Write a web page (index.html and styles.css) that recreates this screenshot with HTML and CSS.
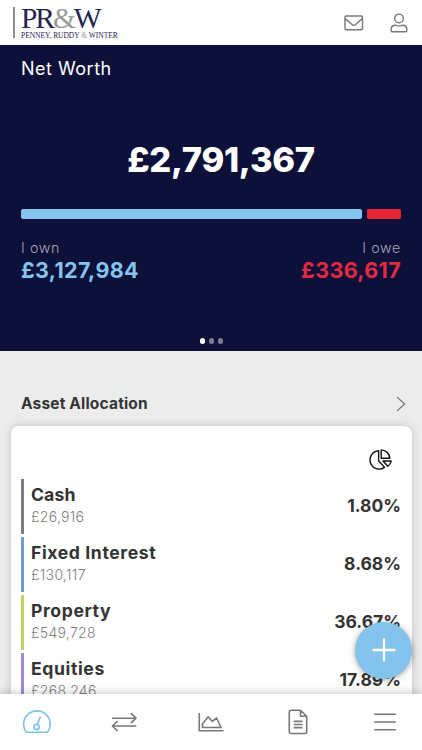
FILE: index.html
```html
<!DOCTYPE html>
<html lang="en">
<head>
<meta charset="utf-8">
<meta name="viewport" content="width=device-width, initial-scale=1">
<title>Net Worth</title>
<link rel="stylesheet" href="styles.css">
</head>
<body>
<div class="app">
  <header class="header">
    <div class="logo">
      <div class="logo-mark">PR<span class="amp">&amp;</span>W</div>
      <div class="logo-name">PENNEY, RUDDY <span class="amp">&amp;</span> WINTER</div>
    </div>
    <div class="header-icons">
      <svg width="20" height="16" viewBox="0 0 20 16"><rect x="1" y="1" width="17.5" height="13.8" rx="1.2"/><path d="M1.2 3.6 8 9.5Q9.8 11 11.6 9.5L18.3 3.6"/></svg>
      <svg width="18" height="20" viewBox="0 0 18 20"><circle cx="9" cy="5.4" r="4.3"/><path d="M1.2 17.5V16.5C1.2 13.8 3 12.3 5.2 12.3 6.5 12.3 7.5 12.9 9 12.9S11.5 12.3 12.8 12.3C15 12.3 16.8 13.8 16.8 16.5V17.5Q16.8 18.8 15.5 18.8H2.5Q1.2 18.8 1.2 17.5Z"/></svg>
    </div>
  </header>

  <section class="hero">
    <h1 class="hero-title">Net Worth</h1>
    <div class="hero-total">£2,791,367</div>
    <div class="split"><div class="split-own"></div><div class="split-owe"></div></div>
    <div class="totals">
      <div class="own"><div class="label">I own</div><div class="value own-value">£3,127,984</div></div>
      <div class="owe"><div class="label owe-label">I owe</div><div class="value owe-value">£336,617</div></div>
    </div>
    <div class="dots"><i class="dot active"></i><i class="dot"></i><i class="dot"></i></div>
  </section>

  <main class="content">
    <div class="section-head">
      <h2 class="section-title">Asset Allocation</h2>
      <svg class="chevron" width="10" height="16" viewBox="0 0 10 16"><path d="M1 1 8.6 8 1 15"/></svg>
    </div>
    <div class="card">
      <div class="card-tools">
        <svg class="pie" width="24" height="22" viewBox="0 0 24 22"><path d="M9.6 1.7A9.2 9.2 0 1 0 15.5 18.4L9.6 11.7Z"/><path d="M12.2.9A8.7 8.7 0 0 1 20.8 9.3H12.2Z"/><path d="M14 12H22.2Q21.7 15 18.8 17.2Z"/></svg>
      </div>
      <div class="row cash"><div><div class="name">Cash</div><div class="amount">£26,916</div></div><div class="percent">1.80%</div></div>
      <div class="row fixed"><div><div class="name">Fixed Interest</div><div class="amount">£130,117</div></div><div class="percent">8.68%</div></div>
      <div class="row property"><div><div class="name">Property</div><div class="amount">£549,728</div></div><div class="percent">36.67%</div></div>
      <div class="row equities"><div><div class="name">Equities</div><div class="amount">£268,246</div></div><div class="percent">17.89%</div></div>
    </div>
  </main>

  <button class="add" aria-label="Add"><svg width="24" height="24" viewBox="0 0 24 24"><path d="M12 .5V23.5M.5 12H23.5"/></svg></button>

  <nav class="nav">
    <svg class="current" width="30" height="24" viewBox="0 0 30 24"><path d="M4.4 22.3A13.3 13.3 0 1 1 25.4 22.3Z"/><circle cx="14.6" cy="17" r="2.6"/><path d="M15.4 14.4 18.4 6.6"/></svg>
    <svg width="28" height="20" viewBox="0 0 28 20"><path d="M2 6.2H26M20.8 1.2 26 6.2 20.8 11.2M26.3 14H2.4M7.5 9 2.4 14 7.5 19"/></svg>
    <svg width="28" height="20" viewBox="0 0 28 20"><path d="M2.3 1V18.8H26.5"/><path d="M5.5 15.5V11.7L11.2 4.8 15.2 9.3 19.6 6 24 15.5Z"/></svg>
    <svg width="20" height="26" viewBox="0 0 20 26"><path d="M12.5 1.3H3Q1.3 1.3 1.3 3V22.8Q1.3 24.5 3 24.5H17Q18.7 24.5 18.7 22.8V7.3ZM12.5 1.3V7.3H18.7M5.7 12.4H14.5M5.7 15.5H14.5M5.7 18.6H14.5"/></svg>
    <svg width="24" height="20" viewBox="0 0 24 20"><path d="M1.2 2.3H22.8M1.2 10H22.8M1.2 17.7H22.8"/></svg>
  </nav>
</div>
</body>
</html>
```

FILE: styles.css
```css
* { box-sizing: border-box; }
body { margin: 0; background: #ececec; color: #343434; font-family: Inter, "Liberation Sans", sans-serif; }
h1, h2 { margin: 0; }
svg { display: block; fill: none; stroke: #777; stroke-width: 1.4; stroke-linejoin: round; }
.app { height: 750px; display: flex; flex-direction: column; overflow: hidden; position: relative; }

.header { flex: none; height: 45px; background: #fff; display: flex; justify-content: space-between; padding: 7px 14px 0 13px; }
.logo { height: 31px; border-left: 2px solid #8e8e8e; padding-left: 6px; font-family: "Liberation Serif", serif; color: #25234f; white-space: nowrap; }
.logo-mark { font-size: 29.5px; line-height: 22px; height: 25px; letter-spacing: -2.1px; }
.logo-name { font-size: 7.5px; line-height: 8px; letter-spacing: -.03px; }
.amp { color: #999; }
.header-icons { display: flex; align-items: center; gap: 26px; height: 31px; }

.hero { flex: none; height: 305.5px; background: #0d1038; color: #fff; padding: 12px 21px 0; display: flex; flex-direction: column; }
.hero-title { font-size: 18px; line-height: 24px; font-weight: 400; letter-spacing: .5px; }
.hero-total { font-size: 34.5px; line-height: 44px; font-weight: 800; text-align: center; margin-top: 57px; padding-left: 20px; letter-spacing: -.3px; }
.split { display: flex; gap: 5px; height: 10px; margin-top: 27px; }
.split-own { flex: 342; background: #84c4ee; border-radius: 2px; }
.split-owe { flex: 34; background: #e92438; border-radius: 2px; }
.totals { display: flex; justify-content: space-between; margin-top: 20px; }
.owe { text-align: right; }
.label { font-size: 14.3px; line-height: 18px; color: #a6a7b8; font-weight: 300; letter-spacing: .6px; }
.value { font-size: 21.5px; line-height: 26px; font-weight: 700; letter-spacing: .35px; }
.own-value { color: #84c4ee; }
.owe-value { color: #e22b43; }
.dots { display: flex; justify-content: center; gap: 4px; margin: auto 0 7px 1px; }
.dot { width: 5.2px; height: 5.2px; border-radius: 50%; background: #7d7e8a; }
.dot.active { background: #fff; }

.content { flex: 1; min-height: 0; overflow: hidden; }
.section-head { display: flex; align-items: center; justify-content: space-between; height: 22px; margin: 42px 16px 11.5px 21px; }
.section-title { font-size: 15.5px; line-height: 22px; font-weight: 700; letter-spacing: .17px; }
.chevron { stroke-width: 1.2; stroke-linejoin: miter; }
.card { margin: 0 10.5px; height: 340px; padding: 23px 10.5px 0; background: #fff; border-radius: 8px; box-shadow: 0 0 10px rgba(0, 0, 0, .18); }
.card-tools { display: flex; justify-content: flex-end; height: 30px; padding-right: 8px; }
.pie { stroke: #111; }
.row { display: flex; justify-content: space-between; height: 55px; margin-bottom: 3px; padding: 4px 0 0 7px; border-left: 3px solid; }
.cash { border-color: #7c7c80; }
.fixed { border-color: #6d9cd5; }
.property { border-color: #bfd263; }
.equities { border-color: #9d8bd7; }
.name { color: #343434; font-size: 17.6px; line-height: 23px; font-weight: 700; letter-spacing: .6px; }
.amount { color: #808080; font-size: 14px; line-height: 22px; font-weight: 300; letter-spacing: .3px; }
.cash .name { letter-spacing: .1px; }
.percent { color: #343434; font-size: 17.5px; line-height: 46px; font-weight: 700; }

.add { position: absolute; right: 10px; bottom: 71.5px; width: 57px; height: 57px; padding: 0; border: 0; border-radius: 50%; background: #84c4ec; display: grid; place-items: center; box-shadow: 0 1px 6px rgba(0, 0, 0, .35); }
.add svg { stroke: #fff; stroke-width: 2.3; }
.nav { flex: none; height: 56px; background: #fff; display: grid; grid-template-columns: repeat(5, 87.2px); justify-content: center; place-items: center; box-shadow: 0 0 10px rgba(0, 0, 0, .25); position: relative; }
.nav svg { stroke-width: 1.6; }
.nav .current { stroke: #7dc1ef; }
```
